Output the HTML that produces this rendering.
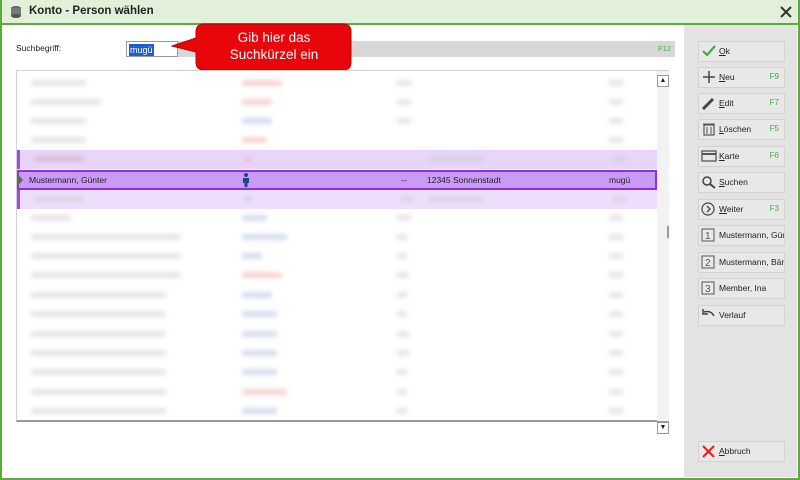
<!DOCTYPE html>
<html><head><meta charset="utf-8"><style>
*{box-sizing:border-box;margin:0;padding:0}
body{width:800px;height:480px;overflow:hidden;font-family:"Liberation Sans",sans-serif;font-size:9px;color:#222;background:#fff;position:relative}
.win{position:absolute;left:0;top:0;width:800px;height:480px;border:2px solid #5aad38}
.title{position:absolute;left:0;top:0;width:800px;height:25px;background:#e2efd9;border:2px solid #5aad38;border-top:0}
.title b{position:absolute;left:27px;top:5px;font-size:11.5px;color:#222}
.rp{position:absolute;left:684px;top:25px;width:113px;height:452px;background:#e3e3e3}
.btn{position:absolute;left:14px;width:87px;height:21px;background:#e8e8e8;border:1.5px solid #d2d2d2;font-size:8.5px;line-height:18px;padding-left:20px}
.btn i{position:absolute;right:5px;font-style:normal;color:#3cb043;font-size:8px}
.btn svg{position:absolute;left:2px;top:2px}
.list{position:absolute;left:16px;top:70px;width:653px;height:352px;border:1px solid #d0d0d0;background:#fff;border-bottom:2px solid #999}
.row{position:absolute;left:0;width:640px;height:19px}
.bl{position:absolute;top:6px;height:6px;background:#ccc;filter:blur(2.5px);opacity:.5}
.sb{position:absolute;left:640px;top:0;width:12px;height:350px;background:#f2f2f2}
.arr{position:absolute;width:12px;height:12px;background:#fff;border:1px solid #999;font-size:7px;text-align:center;line-height:10px}
</style></head><body>
<div class="win"></div>
<div class="title"><svg width="16" height="14" style="position:absolute;left:6px;top:5px"><ellipse cx="8" cy="3" rx="5" ry="2" fill="#666"/><rect x="3" y="3" width="10" height="8" fill="#777"/><ellipse cx="8" cy="11" rx="5" ry="2" fill="#555"/></svg><b>Konto - Person wählen</b>
<svg width="14" height="14" style="position:absolute;left:777px;top:5px"><path d="M2 2L12 12M12 2L2 12" stroke="#333" stroke-width="2"/></svg></div>
<div style="position:absolute;left:16px;top:43px;font-size:8.5px">Suchbegriff:</div>
<div style="position:absolute;left:178px;top:41px;width:497px;height:16px;background:#d7d7d7"><span style="position:absolute;right:4px;top:3px;color:#3cb043;font-size:7.5px">F12</span></div>
<div style="position:absolute;left:126px;top:41px;width:52px;height:16px;border:1px solid #999;background:#fff"><span style="background:#1e5fd0;color:#fff;font-size:9px;margin:2px;padding:0 1px;line-height:12px;display:inline-block">mugü</span></div>
<svg style="position:absolute;left:168px;top:22px" width="185" height="50"><path d="M4 24L28 16 28 10Q28 2 36 2L175 2Q183 2 183 10L183 40Q183 48 175 48L36 48Q28 48 28 40L28 30Z" fill="#e8060a" stroke="#b00" stroke-width="1"/><text x="106" y="20" font-family="Liberation Sans" font-size="13.5" fill="#fff" text-anchor="middle">Gib hier das</text><text x="106" y="37" font-family="Liberation Sans" font-size="13.5" fill="#fff" text-anchor="middle">Suchkürzel ein</text></svg>
<div class="list">
<div class="row" style="top:3px"><div class="bl" style="left:14px;width:55px"></div><div class="bl" style="left:225px;width:40px;background:#eaa"></div><div class="bl" style="left:380px;width:14px"></div><div class="bl" style="left:592px;width:14px"></div></div>
<div class="row" style="top:22px"><div class="bl" style="left:14px;width:70px"></div><div class="bl" style="left:225px;width:30px;background:#eaa"></div><div class="bl" style="left:380px;width:14px"></div><div class="bl" style="left:592px;width:14px"></div></div>
<div class="row" style="top:41px"><div class="bl" style="left:14px;width:55px"></div><div class="bl" style="left:225px;width:30px;background:#abd"></div><div class="bl" style="left:380px;width:14px"></div><div class="bl" style="left:592px;width:14px"></div></div>
<div class="row" style="top:60px"><div class="bl" style="left:14px;width:55px"></div><div class="bl" style="left:225px;width:25px;background:#eaa"></div><div class="bl" style="left:592px;width:14px"></div></div>
<div class="row" style="top:79px;background:#e8d5fb;border-left:3px solid #9b4df0"><div class="bl" style="left:14px;width:50px;background:#caa"></div><div class="bl" style="left:225px;width:6px;background:#eaa"></div><div class="bl" style="left:408px;width:55px"></div><div class="bl" style="left:592px;width:14px"></div></div>
<div class="row" style="top:99px;height:20px;background:#c99bf7;border:2px solid #8a2ff0;font-size:8.5px;line-height:16px"><svg width="6" height="14" style="position:absolute;left:-2px;top:1px"><path d="M0 0L6 7 0 14Z" fill="#666"/></svg><span style="position:absolute;left:10px">Mustermann, Günter</span><svg width="8" height="14" style="position:absolute;left:223px;top:1px"><circle cx="4" cy="2" r="2" fill="#1a4a80"/><path d="M1 5H7V10H5.5V14H2.5V10H1Z" fill="#1a4a80"/></svg><span style="position:absolute;left:382px">--</span><span style="position:absolute;left:408px">12345 Sonnenstadt</span><span style="position:absolute;left:590px">mugü</span></div>
<div class="row" style="top:119px;background:#eedefc;border-left:3px solid #9b4df0"><div class="bl" style="left:14px;width:50px"></div><div class="bl" style="left:225px;width:6px;background:#abd"></div><div class="bl" style="left:380px;width:14px"></div><div class="bl" style="left:408px;width:55px"></div><div class="bl" style="left:592px;width:14px"></div></div>
<div class="row" style="top:138px"><div class="bl" style="left:14px;width:40px"></div><div class="bl" style="left:225px;width:25px;background:#abd"></div><div class="bl" style="left:380px;width:14px"></div><div class="bl" style="left:592px;width:14px"></div></div>
<div class="row" style="top:157px"><div class="bl" style="left:14px;width:150px"></div><div class="bl" style="left:225px;width:45px;background:#abd"></div><div class="bl" style="left:380px;width:10px"></div><div class="bl" style="left:592px;width:14px"></div></div>
<div class="row" style="top:176px"><div class="bl" style="left:14px;width:150px"></div><div class="bl" style="left:225px;width:20px;background:#abd"></div><div class="bl" style="left:380px;width:10px"></div><div class="bl" style="left:592px;width:14px"></div></div>
<div class="row" style="top:195px"><div class="bl" style="left:14px;width:150px"></div><div class="bl" style="left:225px;width:40px;background:#eaa"></div><div class="bl" style="left:380px;width:12px"></div><div class="bl" style="left:592px;width:14px"></div></div>
<div class="row" style="top:215px"><div class="bl" style="left:14px;width:135px"></div><div class="bl" style="left:225px;width:30px;background:#abd"></div><div class="bl" style="left:380px;width:10px"></div><div class="bl" style="left:592px;width:14px"></div></div>
<div class="row" style="top:234px"><div class="bl" style="left:14px;width:135px"></div><div class="bl" style="left:225px;width:35px;background:#abd"></div><div class="bl" style="left:380px;width:10px"></div><div class="bl" style="left:592px;width:14px"></div></div>
<div class="row" style="top:254px"><div class="bl" style="left:14px;width:135px"></div><div class="bl" style="left:225px;width:35px;background:#abd"></div><div class="bl" style="left:380px;width:12px"></div><div class="bl" style="left:592px;width:14px"></div></div>
<div class="row" style="top:273px"><div class="bl" style="left:14px;width:135px"></div><div class="bl" style="left:225px;width:35px;background:#abd"></div><div class="bl" style="left:380px;width:12px"></div><div class="bl" style="left:592px;width:14px"></div></div>
<div class="row" style="top:292px"><div class="bl" style="left:14px;width:135px"></div><div class="bl" style="left:225px;width:35px;background:#abd"></div><div class="bl" style="left:380px;width:10px"></div><div class="bl" style="left:592px;width:14px"></div></div>
<div class="row" style="top:312px"><div class="bl" style="left:14px;width:135px"></div><div class="bl" style="left:225px;width:45px;background:#eaa"></div><div class="bl" style="left:380px;width:10px"></div><div class="bl" style="left:592px;width:14px"></div></div>
<div class="row" style="top:331px"><div class="bl" style="left:14px;width:135px"></div><div class="bl" style="left:225px;width:35px;background:#abd"></div><div class="bl" style="left:380px;width:10px"></div><div class="bl" style="left:592px;width:14px"></div></div>
<div class="sb"><div class="arr" style="top:4px;left:0">▲</div><div style="position:absolute;top:155px;left:10px;width:2px;height:12px;background:#999"></div></div>
</div>
<div class="arr" style="left:657px;top:422px;height:12px">▼</div>
<div class="rp">
<div class="btn" style="top:16px"><svg width="16" height="14"><path d="M2 7L6 11 14 2" stroke="#3cb043" stroke-width="2.2" fill="none"/></svg><u>O</u>k</div>
<div class="btn" style="top:42px"><svg width="16" height="14"><path d="M8 1V13M2 7H14" stroke="#444" stroke-width="1.5"/></svg><u>N</u>eu<i>F9</i></div>
<div class="btn" style="top:68px"><svg width="16" height="14"><path d="M2 13L12 3" stroke="#444" stroke-width="3"/></svg><u>E</u>dit<i>F7</i></div>
<div class="btn" style="top:94px"><svg width="16" height="14"><rect x="3" y="3" width="10" height="10" fill="none" stroke="#555" stroke-width="1.2"/><path d="M2 2H14M6 5V12M10 5V12" stroke="#555"/></svg><u>L</u>öschen<i>F5</i></div>
<div class="btn" style="top:121px"><svg width="16" height="14"><rect x="1" y="2" width="14" height="10" fill="none" stroke="#555" stroke-width="1.3"/><path d="M1 5H15" stroke="#555" stroke-width="2"/></svg><u>K</u>arte<i>F6</i></div>
<div class="btn" style="top:147px"><svg width="16" height="14"><circle cx="6" cy="6" r="4" fill="none" stroke="#444" stroke-width="1.5"/><path d="M9 9L14 13" stroke="#444" stroke-width="2"/></svg><u>S</u>uchen</div>
<div class="btn" style="top:174px"><svg width="16" height="14"><circle cx="7" cy="7" r="6" fill="none" stroke="#444" stroke-width="1.2"/><path d="M6 4L9 7 6 10" stroke="#444" stroke-width="1.3" fill="none"/></svg><u>W</u>eiter<i>F3</i></div>
<div class="btn" style="top:200px;overflow:hidden;white-space:nowrap"><svg width="16" height="14"><rect x="1" y="1" width="12" height="12" fill="none" stroke="#555"/><text x="4" y="11" font-size="10" font-family="Liberation Sans" fill="#555">1</text></svg>Mustermann, Gün</div>
<div class="btn" style="top:227px;overflow:hidden;white-space:nowrap"><svg width="16" height="14"><rect x="1" y="1" width="12" height="12" fill="none" stroke="#555"/><text x="4" y="11" font-size="10" font-family="Liberation Sans" fill="#555">2</text></svg>Mustermann, Bär</div>
<div class="btn" style="top:253px"><svg width="16" height="14"><rect x="1" y="1" width="12" height="12" fill="none" stroke="#555"/><text x="4" y="11" font-size="10" font-family="Liberation Sans" fill="#555">3</text></svg>Member, Ina</div>
<div class="btn" style="top:280px"><svg width="16" height="14"><path d="M3 4Q10 2 13 8" stroke="#444" stroke-width="1.5" fill="none"/><path d="M2 1V6H7" stroke="#444" stroke-width="1.5" fill="none"/></svg>Verlauf</div>
<div class="btn" style="top:416px"><svg width="16" height="14"><path d="M2 2L13 13M13 2L2 13" stroke="#e02020" stroke-width="2"/></svg><u>A</u>bbruch</div>
</div>
</body></html>
